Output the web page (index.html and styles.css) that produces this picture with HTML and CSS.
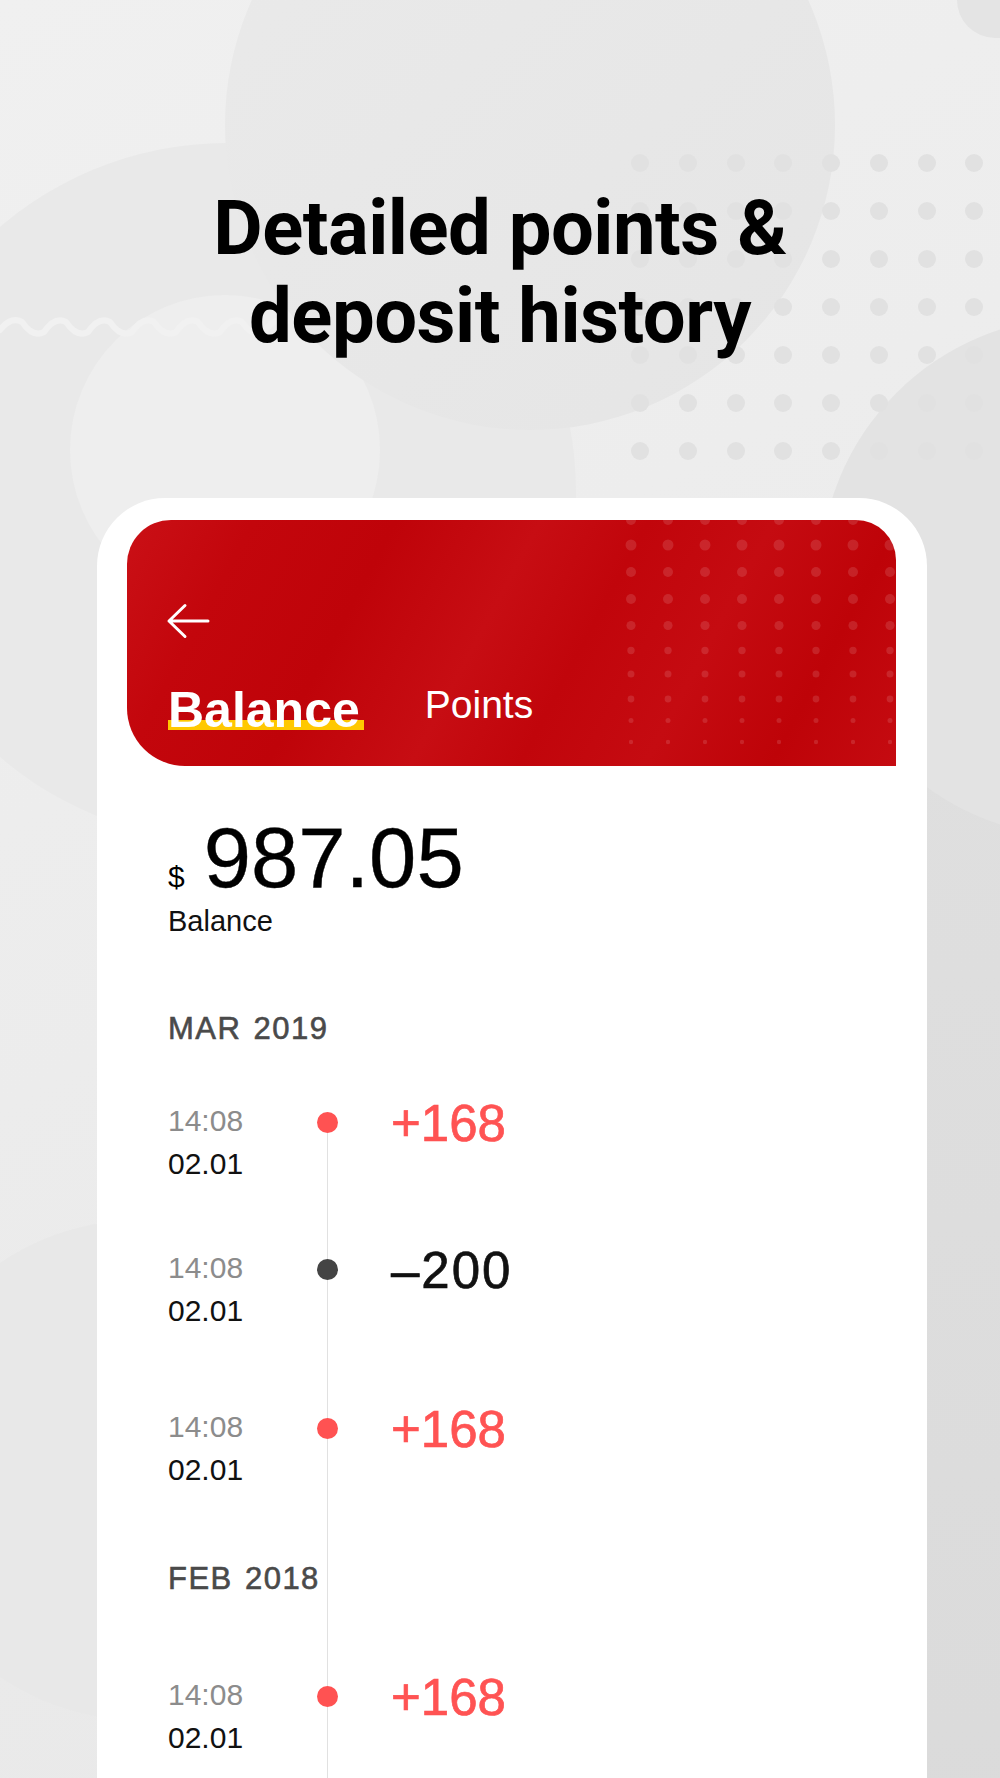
FILE: index.html
```html
<!DOCTYPE html>
<html lang="en">
<head>
<meta charset="utf-8">
<title>Detailed points &amp; deposit history</title>
<link rel="stylesheet" href="styles.css">
</head>
<body>
<div class="stage">
  <svg class="backdrop" width="1000" height="1778" viewBox="0 0 1000 1778" aria-hidden="true">
    <defs>
      <linearGradient id="bgGrad" x1="0" y1="0" x2="0.3" y2="1">
        <stop offset="0" stop-color="#f0f0f0"/>
        <stop offset="1" stop-color="#e9e9e9"/>
      </linearGradient>
      <linearGradient id="circA" x1="0" y1="0" x2="1" y2="1">
        <stop offset="0" stop-color="#eaeaea"/>
        <stop offset="1" stop-color="#e5e5e5"/>
      </linearGradient>
      <linearGradient id="circE" x1="0" y1="0" x2="0" y2="1">
        <stop offset="0" stop-color="#e0e0e0"/>
        <stop offset="1" stop-color="#d9d9d9"/>
      </linearGradient>
    </defs>
    <rect width="1000" height="1778" fill="url(#bgGrad)"/>
    <circle cx="227" cy="492" r="349" fill="#e9e9e9"/>
    <circle cx="225" cy="450" r="155" fill="#eeeeee"/>
    <path d="M0 330 Q11 316 22 322 Q33 338 44 332 Q55 316 66 322 Q77 338 88 332 Q99 316 110 322 Q121 338 132 332 Q143 316 154 322 Q165 338 176 332 Q187 316 198 322 Q209 338 220 332 Q231 316 242 322 Q253 338 264 332 Q275 316 286 322" fill="none" stroke="#f1f1f1" stroke-width="6" stroke-linecap="round" stroke-linejoin="round"/>
    <circle cx="530" cy="125" r="305" fill="url(#circA)"/>
    <circle cx="140" cy="1470" r="250" fill="#e8e8e8"/>
    <circle cx="1300" cy="1350" r="880" fill="url(#circE)"/>
    <circle cx="1080" cy="577" r="260" fill="#e3e3e3"/>
    <rect x="957" y="-100" width="200" height="138" rx="38" fill="#e4e4e4"/>
    <g fill="#e1e1e1">
      <circle cx="640" cy="163" r="9"/><circle cx="688" cy="163" r="9"/><circle cx="736" cy="163" r="9"/><circle cx="783" cy="163" r="9"/><circle cx="831" cy="163" r="9"/><circle cx="879" cy="163" r="9"/><circle cx="927" cy="163" r="9"/><circle cx="974" cy="163" r="9"/>
      <circle cx="640" cy="211" r="9"/><circle cx="688" cy="211" r="9"/><circle cx="736" cy="211" r="9"/><circle cx="783" cy="211" r="9"/><circle cx="831" cy="211" r="9"/><circle cx="879" cy="211" r="9"/><circle cx="927" cy="211" r="9"/><circle cx="974" cy="211" r="9"/>
      <circle cx="640" cy="259" r="9"/><circle cx="688" cy="259" r="9"/><circle cx="736" cy="259" r="9"/><circle cx="783" cy="259" r="9"/><circle cx="831" cy="259" r="9"/><circle cx="879" cy="259" r="9"/><circle cx="927" cy="259" r="9"/><circle cx="974" cy="259" r="9"/>
      <circle cx="640" cy="307" r="9"/><circle cx="688" cy="307" r="9"/><circle cx="736" cy="307" r="9"/><circle cx="783" cy="307" r="9"/><circle cx="831" cy="307" r="9"/><circle cx="879" cy="307" r="9"/><circle cx="927" cy="307" r="9"/><circle cx="974" cy="307" r="9"/>
      <circle cx="640" cy="355" r="9"/><circle cx="688" cy="355" r="9"/><circle cx="736" cy="355" r="9"/><circle cx="783" cy="355" r="9"/><circle cx="831" cy="355" r="9"/><circle cx="879" cy="355" r="9"/><circle cx="927" cy="355" r="9"/><circle cx="974" cy="355" r="9"/>
      <circle cx="640" cy="403" r="9"/><circle cx="688" cy="403" r="9"/><circle cx="736" cy="403" r="9"/><circle cx="783" cy="403" r="9"/><circle cx="831" cy="403" r="9"/><circle cx="879" cy="403" r="9"/><circle cx="927" cy="403" r="9"/><circle cx="974" cy="403" r="9"/>
      <circle cx="640" cy="451" r="9"/><circle cx="688" cy="451" r="9"/><circle cx="736" cy="451" r="9"/><circle cx="783" cy="451" r="9"/><circle cx="831" cy="451" r="9"/><circle cx="879" cy="451" r="9"/><circle cx="927" cy="451" r="9"/><circle cx="974" cy="451" r="9"/>
    </g>
  </svg>

  <div class="page">
    <h1 class="title">Detailed points &amp;<br>deposit history</h1>

    <div class="phone">
      <header class="hero">
        <svg class="hero-dots" width="284" height="246" viewBox="0 0 284 246" aria-hidden="true">
          <g fill="#ffffff" fill-opacity="0.12">
            <circle cx="19" cy="0" r="5"/><circle cx="56" cy="0" r="5"/><circle cx="93" cy="0" r="5"/><circle cx="130" cy="0" r="5"/><circle cx="167" cy="0" r="5"/><circle cx="204" cy="0" r="5"/><circle cx="241" cy="0" r="5"/><circle cx="278" cy="0" r="5"/>
            <circle cx="19" cy="25" r="5.5"/><circle cx="56" cy="25" r="5.5"/><circle cx="93" cy="25" r="5.5"/><circle cx="130" cy="25" r="5.5"/><circle cx="167" cy="25" r="5.5"/><circle cx="204" cy="25" r="5.5"/><circle cx="241" cy="25" r="5.5"/><circle cx="278" cy="25" r="5.5"/>
            <circle cx="19" cy="52" r="5"/><circle cx="56" cy="52" r="5"/><circle cx="93" cy="52" r="5"/><circle cx="130" cy="52" r="5"/><circle cx="167" cy="52" r="5"/><circle cx="204" cy="52" r="5"/><circle cx="241" cy="52" r="5"/><circle cx="278" cy="52" r="5"/>
            <circle cx="19" cy="79" r="5"/><circle cx="56" cy="79" r="5"/><circle cx="93" cy="79" r="5"/><circle cx="130" cy="79" r="5"/><circle cx="167" cy="79" r="5"/><circle cx="204" cy="79" r="5"/><circle cx="241" cy="79" r="5"/><circle cx="278" cy="79" r="5"/>
            <circle cx="19" cy="105.5" r="4.6"/><circle cx="56" cy="105.5" r="4.6"/><circle cx="93" cy="105.5" r="4.6"/><circle cx="130" cy="105.5" r="4.6"/><circle cx="167" cy="105.5" r="4.6"/><circle cx="204" cy="105.5" r="4.6"/><circle cx="241" cy="105.5" r="4.6"/><circle cx="278" cy="105.5" r="4.6"/>
            <circle cx="19" cy="130.5" r="3.7"/><circle cx="56" cy="130.5" r="3.7"/><circle cx="93" cy="130.5" r="3.7"/><circle cx="130" cy="130.5" r="3.7"/><circle cx="167" cy="130.5" r="3.7"/><circle cx="204" cy="130.5" r="3.7"/><circle cx="241" cy="130.5" r="3.7"/><circle cx="278" cy="130.5" r="3.7"/>
            <circle cx="19" cy="154" r="3.5"/><circle cx="56" cy="154" r="3.5"/><circle cx="93" cy="154" r="3.5"/><circle cx="130" cy="154" r="3.5"/><circle cx="167" cy="154" r="3.5"/><circle cx="204" cy="154" r="3.5"/><circle cx="241" cy="154" r="3.5"/><circle cx="278" cy="154" r="3.5"/>
            <circle cx="19" cy="179" r="3.4"/><circle cx="56" cy="179" r="3.4"/><circle cx="93" cy="179" r="3.4"/><circle cx="130" cy="179" r="3.4"/><circle cx="167" cy="179" r="3.4"/><circle cx="204" cy="179" r="3.4"/><circle cx="241" cy="179" r="3.4"/><circle cx="278" cy="179" r="3.4"/>
            <circle cx="19" cy="200.5" r="2.5"/><circle cx="56" cy="200.5" r="2.5"/><circle cx="93" cy="200.5" r="2.5"/><circle cx="130" cy="200.5" r="2.5"/><circle cx="167" cy="200.5" r="2.5"/><circle cx="204" cy="200.5" r="2.5"/><circle cx="241" cy="200.5" r="2.5"/><circle cx="278" cy="200.5" r="2.5"/>
            <circle cx="19" cy="222" r="2.2"/><circle cx="56" cy="222" r="2.2"/><circle cx="93" cy="222" r="2.2"/><circle cx="130" cy="222" r="2.2"/><circle cx="167" cy="222" r="2.2"/><circle cx="204" cy="222" r="2.2"/><circle cx="241" cy="222" r="2.2"/><circle cx="278" cy="222" r="2.2"/>
          </g>
        </svg>
        <div class="hero-body">
          <svg class="back" width="44" height="36" viewBox="0 0 44 36" aria-label="Back">
            <path d="M42 18 H3 M19 2.5 L3 18 L19 33.5" fill="none" stroke="#ffffff" stroke-width="3" stroke-linecap="round" stroke-linejoin="round"/>
          </svg>
          <nav class="tabs">
            <span class="tab tab-active">Balance</span>
            <span class="tab">Points</span>
          </nav>
        </div>
      </header>

      <div class="content">
        <section class="summary">
          <div class="amount-row">
            <span class="currency">$</span>
            <span class="amount-value">987.05</span>
          </div>
          <div class="balance-label">Balance</div>
        </section>

        <section class="history">
          <div class="month">MAR 2019</div>
          <div class="timeline">
            <div class="row row-gap-sm">
              <div class="when"><div class="time">14:08</div><div class="date">02.01</div></div>
              <span class="dot"></span>
              <div class="value">+168</div>
            </div>
            <div class="row row-gap-lg">
              <div class="when"><div class="time">14:08</div><div class="date">02.01</div></div>
              <span class="dot dot-dark"></span>
              <div class="value value-neg">–200</div>
            </div>
            <div class="row row-gap-md">
              <div class="when"><div class="time">14:08</div><div class="date">02.01</div></div>
              <span class="dot"></span>
              <div class="value">+168</div>
            </div>
            <div class="month month-inline">FEB 2018</div>
            <div class="row">
              <div class="when"><div class="time">14:08</div><div class="date">02.01</div></div>
              <span class="dot"></span>
              <div class="value">+168</div>
            </div>
          </div>
        </section>
      </div>
    </div>
  </div>
</div>
</body>
</html>
```
FILE: styles.css
```css
html, body {
  margin: 0;
  padding: 0;
}

body {
  width: 1000px;
  height: 1778px;
  overflow: hidden;
  background: #eeeeee;
  font-family: "Liberation Sans", Arial, sans-serif;
  color: #111;
}

.stage {
  display: grid;
  width: 1000px;
  height: 1778px;
  overflow: hidden;
}

.stage > * {
  grid-area: 1 / 1;
}

.backdrop {
  display: block;
}

.title {
  margin: 0;
  padding-top: 184px;
  font-family: Roboto, "Liberation Sans", sans-serif;
  font-weight: 700;
  font-size: 76px;
  line-height: 88px;
  letter-spacing: -0.5px;
  text-align: center;
  color: #000;
}

.phone {
  margin: 138px 0 0 97px;
  width: 830px;
  min-height: 1280px;
  box-sizing: border-box;
  padding: 22px 31px 0 30px;
  background: #ffffff;
  border-radius: 68px 68px 0 0;
}

.hero {
  display: grid;
  height: 246px;
  border-radius: 44px 40px 0 58px;
  overflow: hidden;
  background: linear-gradient(118deg,
    #ca1016 0%,
    #c3060c 14%,
    #bf0309 30%,
    #c70d13 46%,
    #c1050b 58%,
    #c50b11 72%,
    #be0308 86%,
    #c50b11 100%);
}

.hero > * {
  grid-area: 1 / 1;
}

.hero-dots {
  justify-self: end;
  align-self: start;
  display: block;
}

.hero-body {
  padding: 83px 0 0 39px;
  color: #fff;
}

.back {
  display: block;
}

.tabs {
  display: flex;
  align-items: flex-start;
  gap: 61px;
  margin: 46px 0 0 2px;
}

.tab {
  font-size: 39px;
  line-height: 39px;
  color: #fff;
}

.tab-active {
  font-size: 50px;
  line-height: 50px;
  font-weight: 700;
  padding-right: 4px;
  background: linear-gradient(#ffc800, #ffc800) 0 35px / 100% 10px no-repeat;
}

.content {
  padding-left: 41px;
}

.summary {
  margin-top: 50px;
}

.amount-row {
  display: flex;
  align-items: baseline;
}

.currency {
  font-size: 30px;
  line-height: 30px;
  margin-right: 19px;
  color: #000;
}

.amount-value {
  font-size: 85px;
  line-height: 84px;
  color: #000;
  -webkit-text-stroke: 0.4px #000;
}

.balance-label {
  margin-top: 3px;
  font-size: 29px;
  line-height: 36px;
  color: #111;
}

.history {
  margin-top: 70px;
}

.month {
  font-size: 31px;
  line-height: 40px;
  color: #4a4a4a;
  letter-spacing: 1.5px;
  word-spacing: 2px;
  -webkit-text-stroke: 0.6px #4a4a4a;
}

.month-inline {
  margin-bottom: 74px;
}

.timeline {
  margin-top: 50px;
  padding-bottom: 40px;
  background: linear-gradient(#e1e1e1, #e1e1e1) 159px 23px / 1px 100% no-repeat;
}

.row {
  display: flex;
  align-items: flex-start;
}

.row-gap-sm {
  margin-bottom: 61px;
}

.row-gap-lg {
  margin-bottom: 73px;
}

.row-gap-md {
  margin-bottom: 68px;
}

.when {
  width: 149px;
  flex: none;
  font-size: 30px;
  line-height: 43px;
}

.time {
  color: #8c8c8c;
}

.date {
  color: #111;
}

.dot {
  flex: none;
  width: 21px;
  height: 21px;
  margin-top: 12.5px;
  border-radius: 50%;
  background: #ff5252;
}

.dot-dark {
  background: #444444;
}

.value {
  margin-left: 53px;
  font-size: 51px;
  line-height: 50px;
  color: #ff5353;
  -webkit-text-stroke: 0.7px #ff5353;
}

.value-neg {
  color: #111;
  letter-spacing: 2px;
  -webkit-text-stroke: 0.7px #111;
}
```
